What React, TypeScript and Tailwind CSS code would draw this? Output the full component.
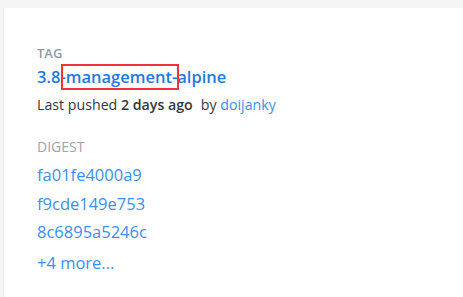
export default function App() {
  const font = { fontFamily: '"Open Sans", "Noto Sans", sans-serif' };
  return (
    <div className="w-[463px] h-[297px] bg-[#f5f5f5] pt-[8px] pl-[3px] overflow-hidden" style={font}>
      <div className="h-full bg-white border-l border-[#e8e8e8] pl-[33px] pt-[37px]">
        <div className="text-[13px] font-semibold text-[#8f9ba8] leading-[16px]">TAG</div>
        <div className="mt-[5px] text-[16.5px] font-semibold text-[#1f7ae0] leading-[22px] flex">
          <span>3.8</span>
          <span className="relative">
            -management-
            <span className="absolute left-[1px] right-[-2px] top-[-2px] bottom-[-2px] border-2 border-[#f0333a]"></span>
          </span>
          <span>alpine</span>
        </div>
        <div className="mt-[7px] text-[14.2px] text-[#333840] leading-[20px]">
          Last pushed <span className="font-semibold">2 days ago</span>
          <span className="ml-[8px]">by </span>
          <span className="text-[#3d8ef0]">doijanky</span>
        </div>
        <div className="mt-[23px] text-[14px] text-[#9aa5b0] leading-[18px]">DIGEST</div>
        <div className="mt-[8px] flex flex-col text-[16.5px] text-[#3d8ef0] leading-[22px] gap-[6.5px]">
          <span>fa01fe4000a9</span>
          <span>f9cde149e753</span>
          <span>8c6895a5246c</span>
          <span className="mt-[2.5px]">+4 more...</span>
        </div>
      </div>
    </div>
  );
}
